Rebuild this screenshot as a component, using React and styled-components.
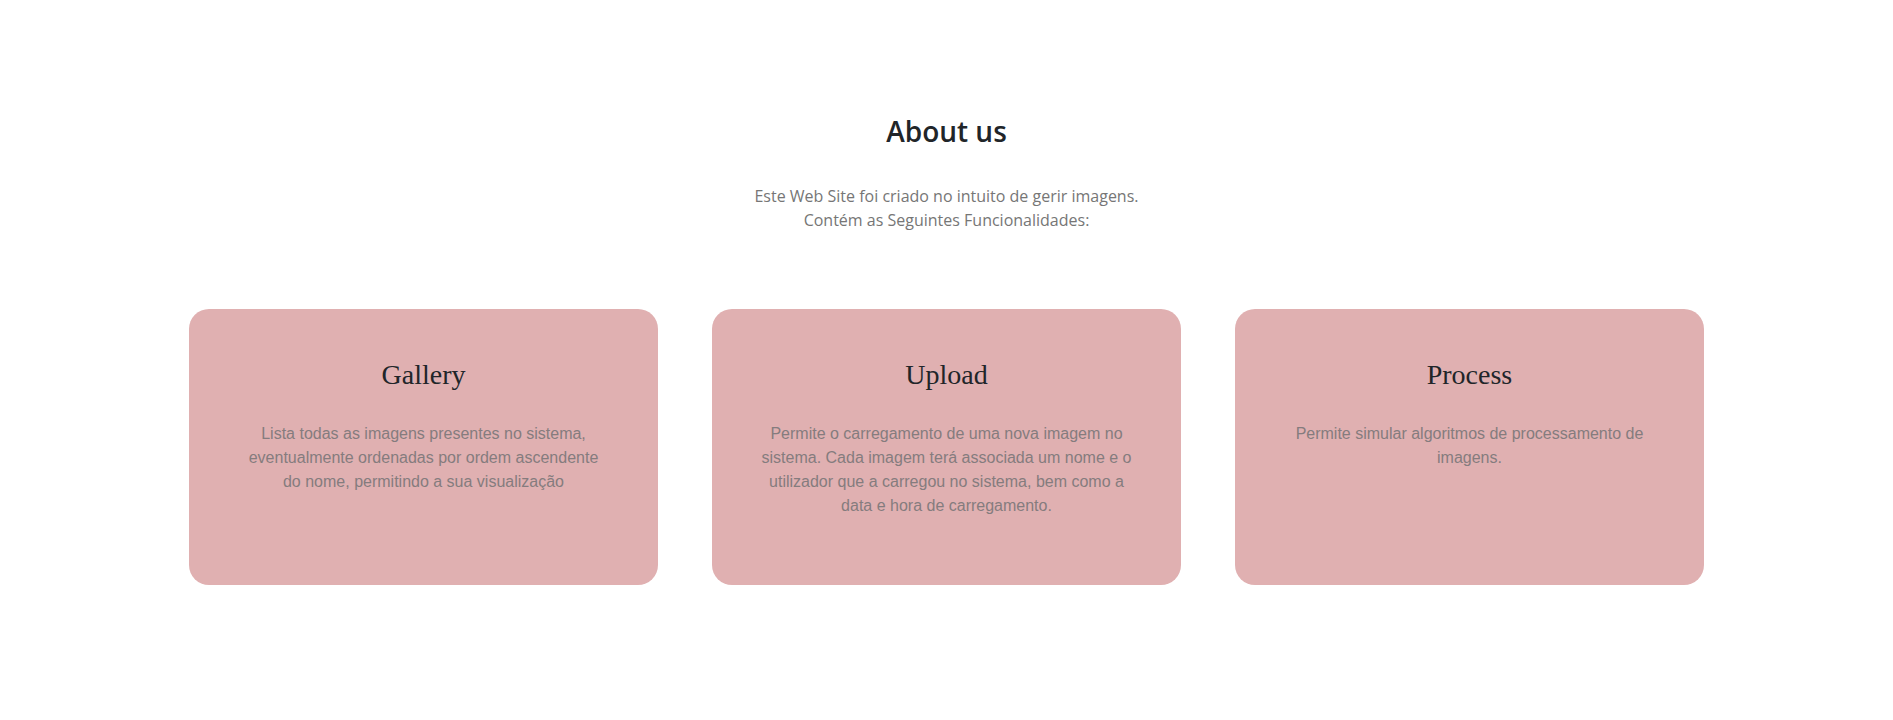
import React from "react";
import styled, { createGlobalStyle } from "styled-components";

const GlobalStyle = createGlobalStyle`
  html, body {
    margin: 0;
    padding: 0;
    background: #ffffff;
  }
  body {
    font-family: "Open Sans", "Noto Sans", sans-serif;
    color: #212529;
  }
`;

const Section = styled.section`
  display: flex;
  flex-direction: column;
  align-items: center;
  padding-top: 115px;
  padding-bottom: 135px;
`;

const Heading = styled.h2`
  margin: 0 0 35px;
  font-family: "Open Sans", "Noto Sans", sans-serif;
  font-weight: 600;
  font-size: 28px;
  line-height: 33.6px;
  color: #212529;
  text-align: center;
`;

const Intro = styled.p`
  margin: 0 0 77px;
  font-family: "Open Sans", "Noto Sans", sans-serif;
  font-size: 16px;
  line-height: 24px;
  color: #767676;
  text-align: center;
`;

const CardGrid = styled.div`
  display: grid;
  grid-template-columns: repeat(3, 469px);
  gap: 54px;
  justify-content: center;
`;

const Card = styled.article`
  box-sizing: border-box;
  height: 276px;
  padding: 49px 48px 48px;
  background: #e0b0b1;
  border-radius: 20px;
  text-align: center;
`;

const CardTitle = styled.h3`
  margin: 0 0 31px;
  font-family: "Liberation Serif", "Times New Roman", serif;
  font-weight: 400;
  font-size: 28px;
  line-height: 33.6px;
  color: #212529;
`;

const CardText = styled.p`
  margin: 0 auto;
  max-width: 370px;
  font-family: "Liberation Sans", Arial, sans-serif;
  font-size: 16px;
  line-height: 24px;
  color: #857c7e;
`;

const features = [
  {
    title: "Gallery",
    text: "Lista todas as imagens presentes no sistema, eventualmente ordenadas por ordem ascendente do nome, permitindo a sua visualização",
  },
  {
    title: "Upload",
    text: "Permite o carregamento de uma nova imagem no sistema. Cada imagem terá associada um nome e o utilizador que a carregou no sistema, bem como a data e hora de carregamento.",
  },
  {
    title: "Process",
    text: "Permite simular algoritmos de processamento de imagens.",
  },
];

export default function App() {
  return (
    <>
      <GlobalStyle />
      <Section>
        <Heading>About us</Heading>
        <Intro>
          Este Web Site foi criado no intuito de gerir imagens.
          <br />
          Contém as Seguintes Funcionalidades:
        </Intro>
        <CardGrid>
          {features.map((f) => (
            <Card key={f.title}>
              <CardTitle>{f.title}</CardTitle>
              <CardText>{f.text}</CardText>
            </Card>
          ))}
        </CardGrid>
      </Section>
    </>
  );
}
